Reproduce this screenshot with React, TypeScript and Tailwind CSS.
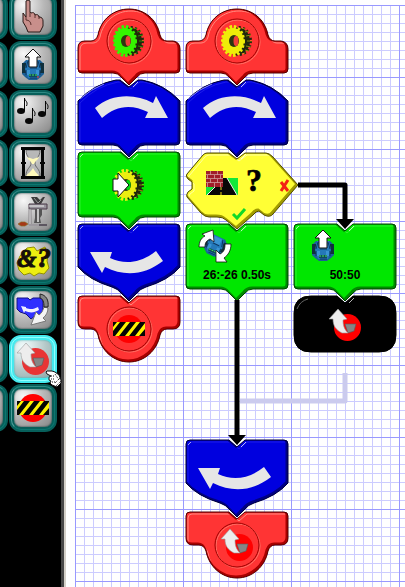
import { useId, useState, type ReactNode } from "react";

type IconName = "hand" | "forward" | "notes" | "timer" | "grinder" | "logic" | "subroutine" | "loop" | "stop";

function Robot() {
  return (
    <g>
      <path d="M9 11h14l4 4v10l-3 3-4 3h-8l-4-3-3-3V15z" fill="#1c5f96" />
      <path d="M5 14h4v10H5zM23 14h4v10h-4z" fill="#10303c" />
      <path d="M10 11h12l2 9-3 9H11l-3-9z" fill="#2478b8" />
      <path d="M12 12h8v7h-8zM10 21h3v5h-3zM19 21h3v5h-3z" fill="#3a93d2" />
      <path d="M13 19h7M13 29h7M9 21v5M23 21v5M11 12l-2 7M21 12l2 7" stroke="#0b3763" fill="none" />
      <path d="M12 25h8v3h-8z" fill="#114a5c" />
      <path d="M12 26h8" stroke="#45e45b" strokeDasharray="2 1" />
    </g>
  );
}

function Gear({ color, hub = "#f04038" }: { color: string; hub?: string }) {
  return (
    <g>
      <ellipse cx="18" cy="16" rx="11" ry="13" fill="#20270c" stroke="#20270c" strokeWidth="4" strokeDasharray="2 2" />
      <path d="M21 3l3 1M24 7l4-1M25 11l5-1M26 16h5M25 21l5 1M24 25l4 1M21 29l3-1" stroke={color} strokeWidth="1" opacity=".5" />
      <ellipse cx="12" cy="16" rx="10" ry="14" fill="none" stroke={color} strokeWidth="4" strokeDasharray="2.4 1.7" />
      <ellipse cx="12" cy="16" rx="7" ry="9" fill="none" stroke={color} strokeWidth="8" />
      <ellipse cx="13" cy="16" rx="5" ry="6" fill="#2c360f" />
      <ellipse cx="15" cy="16" rx="2.500" ry="5" fill={hub} />
    </g>
  );
}

function StopIcon() {
  return (
    <g>
      <circle cx="16" cy="16" r="14" fill="#ff0000" />
      <path d="M0 9h32v14H0z" fill="#fff200" />
      <path d="M0 9h4L0 14zM7 9h6L2 23H0v-5zM17 9h6L12 23H6zM27 9h5v1L22 23h-6zM32 16v7h-6z" fill="#050505" />
    </g>
  );
}

function LoopIcon({ circle = "#ff0000" }: { circle?: string }) {
  return (
    <g>
      <circle cx="18.5" cy="18.5" r="13.5" fill={circle} />
      <path d="M16 15h11l-2 7-6 2z" fill="#858585" stroke="#5b5b5b" strokeWidth=".6" />
      <path d="M9 0l9 10-4 1c0 5 1 9 5 13h-6C7 21 4 17 4 10H0z" fill="#ededed" stroke="#999" strokeWidth=".6" />
    </g>
  );
}

const icons: Record<IconName, ReactNode> = {
  hand: (
    <g>
      <path d="M9 1l2-1 2 1v11l1 1c2-1 4 0 4 2 2-1 4 0 4 2 3 0 4 2 4 4v5l-3 6H11l-2-5-3-5V13l3 4z" fill="#c88f8b" stroke="#281916" strokeWidth="1" />
      <path d="M13 12v5M18 14v4M22 16v3M9 17v3c3 0 5 2 5 5" fill="none" stroke="#5b302d" />
    </g>
  ),
  forward: (
    <g>
      <Robot />
      <path d="M16 0l8 8h-4v10h-8V8H8z" fill="#fff" stroke="#111" />
      <path d="M20 28h2" stroke="#e22" />
    </g>
  ),
  notes: (
    <g>
      <g fill="#080808">
        <ellipse cx="4" cy="13" rx="4" ry="3" />
        <ellipse cx="12" cy="23" rx="4" ry="3" />
        <ellipse cx="25" cy="16" rx="4" ry="3" />
      </g>
      <path d="M7.500 13V0c0 3 4 3 2 8M15.500 23V10c0 3 4 3 2 8M28.500 16V3c0 3 4 3 2 8" fill="none" stroke="#080808" />
    </g>
  ),
  timer: (
    <g>
      <path d="M9 3c0 8 5 8 5 13s-5 5-5 13h14c0-8-5-8-5-13s5-5 5-13z" fill="#b8b8b8" stroke="#686868" />
      <path d="M10 10l6 2 6-2c-1 3-4 4-5 7h-2c-1-3-4-4-5-7zM9 29c2-3 5-4 7-8 2 4 4 5 6 8z" fill="#fff9ba" />
      <path d="M4 0h24v3H4zM4 29h24v3H4z" fill="#050505" />
      <path d="M6.500 2v28M25.500 2v28" stroke="#050505" strokeWidth="3" />
      <path d="M4 16h5M23 16h5" stroke="#050505" strokeWidth="2" />
    </g>
  ),
  grinder: (
    <g>
      <path d="M14 1h6l3 3 3-3h2l-4 7h-6z" fill="#3c3c3c" />
      <path d="M17 2l4 5 3-3" fill="none" stroke="#999" />
      <path d="M12 8h18v5H12z" fill="#96929a" stroke="#4a3a48" strokeWidth="1" />
      <path d="M12 10h15" stroke="#eee" />
      <path d="M12 13h2v16h-2z" fill="#ddd" stroke="#716b70" strokeWidth=".7" />
      <path d="M18 13h7v6l-2 3 1 5h-7l1-5z" fill="#555" />
      <path d="M20 13h2v13h-2z" fill="#c4c4c4" />
      <path d="M12 29h18" stroke="#5c5660" strokeWidth="2" />
      <path d="M12 29h10" stroke="#ddd" />
      <path d="M1 28l3-2h4l3 2-3 2H4z" fill="#a63817" stroke="#8b6e28" strokeWidth=".7" />
    </g>
  ),
  logic: (
    <g>
      <path d="M3 11l7-8 7-1 3 4 8-4 3 9-1 5 2 7-5 6-5-1-5 3-4-3-6 2-5-5-2-7z" fill="#eeee10" stroke="#929000" strokeWidth="1" />
      <g fill="#160e0a" stroke="#160e0a">
        <text x="0" y="22" fontSize="25" className="font-['Liberation_Serif',serif] font-bold italic">&amp;</text>
        <text x="20" y="22" fontSize="28" className="font-['Liberation_Serif',serif] font-bold italic">?</text>
      </g>
    </g>
  ),
  subroutine: (
    <g>
      <path d="M0 4h11l2 2 3-2h10v13l-3 4-5 1-4 3-5-5-6-2-3-3z" fill="#3030ff" stroke="#111181" strokeWidth="1" />
      <path d="M4 12l5 1v1c5 2 8 1 12-1l1 3c-5 3-9 3-14 1l-1 2z" fill="#f2f2ff" />
      <path d="M27 13l4 1c0 4-2 8-5 10l3 3-15 4 5-13 3 3c3-2 4-5 5-8z" fill="#f4f4f4" stroke="#777" strokeWidth="1" />
      <path d="M23 0c6 1 9 6 8 13h-4c0-5-1-8-4-9z" fill="#858585" stroke="#222" />
    </g>
  ),
  loop: <LoopIcon circle="#e83434" />,
  stop: <StopIcon />,
};

const tools: { icon: IconName; label: string }[] = [
  { icon: "hand", label: "Select" },
  { icon: "forward", label: "Move" },
  { icon: "notes", label: "Music" },
  { icon: "timer", label: "Wait" },
  { icon: "grinder", label: "Process" },
  { icon: "logic", label: "Condition" },
  { icon: "subroutine", label: "Subroutine" },
  { icon: "loop", label: "Loop" },
  { icon: "stop", label: "Stop" },
];

function ToolButton({ label, selected, onClick, children }: { label: string; selected?: boolean; onClick?: () => void; children?: ReactNode }) {
  const frame = selected
    ? "border-[#45e9ee] bg-[radial-gradient(circle_at_25%_20%,#f4ffff,#b3c7c7_55%,#91a5a5)] shadow-[inset_0_0_2px_#1cb5b8]"
    : "border-[#075f5a] bg-[radial-gradient(circle_at_25%_20%,#f8f8f8,#b9b9b9_48%,#858585)] shadow-[inset_0_0_2px_#002c2c]";
  return (
    <button type="button" aria-label={label} aria-pressed={selected} onClick={onClick} className={`relative flex size-12 items-center justify-center rounded-xl border-5 ${frame}`}>
      <span className={`pointer-events-none absolute -inset-[3px] rounded-[10px] border ${selected ? "border-[#91ffff]" : "border-[#0b7770] border-t-[#2f8a84] border-l-[#4f9f9a]"}`} />
      <svg viewBox="0 0 32 32" className="relative size-8 shrink-0 overflow-visible">{children}</svg>
    </button>
  );
}

const outlines = {
  start: "M3 43Q3 36 10 36H16Q21 36 23 30C26 14 39 4 54 4S82 14 85 30Q87 36 92 36H98Q105 37 105 44V64Q105 68 101 68H70Q65 68 62 72L54 80L46 72Q43 68 38 68H7Q3 68 3 64Z",
  right: "M3 24Q19 7 41 3H45L54 10L63 3H67Q89 7 105 24V64Q105 68 101 68H70Q65 68 62 72L54 80L46 72Q43 68 38 68H7Q3 68 3 64Z",
  left: "M3 7Q3 3 7 3H46L54 10L62 3H101Q105 3 105 7V46Q94 59 71 66Q65 68 62 72L54 80L46 72Q43 68 37 66Q14 59 3 46Z",
  action: "M3 7Q3 3 7 3H46L54 10L62 3H101Q105 3 105 7V64Q105 68 101 68H70Q65 68 62 72L54 80L46 72Q43 68 38 68H7Q3 68 3 64Z",
  condition: "M24 4H46L54 10L62 4H83Q86 4 90 8L115 36L90 65Q87 69 81 66L76 62Q73 62 70 66L54 80L43 71Q40 68 34 68H26Q22 68 18 64L4 48Q3 46 5 43L9 40V33L5 30Q2 27 4 25L20 6Q22 4 24 4Z",
  end: "M3 7Q3 3 7 3H46L54 10L62 3H101Q105 3 105 7V29Q105 36 98 36H92Q87 36 85 42C82 58 69 69 54 69S26 58 23 42Q21 36 16 36H10Q3 36 3 29Z",
  black: "M20 3H46L54 10L62 3H88Q105 3 105 20V42Q105 59 88 59H20Q3 59 3 42V20Q3 3 20 3Z",
};

const paints = {
  red: { fill: "#ff3434", dark: "#a80000", edge: "#520000", light: "#ff8b80" },
  blue: { fill: "#0000df", dark: "#000083", edge: "#000039", light: "#1c1cea" },
  green: { fill: "#00e700", dark: "#008a00", edge: "#004400", light: "#2cf22c" },
  yellow: { fill: "#ffff35", dark: "#a19b00", edge: "#514c00", light: "#ffffa2" },
  black: { fill: "#000000", dark: "#000000", edge: "#000000", light: "#000000" },
};

function Block({ shape, color, children }: { shape: keyof typeof outlines; color: keyof typeof paints; children: ReactNode }) {
  const id = useId();
  const paint = paints[color];
  const d = outlines[shape];
  return (
    <svg viewBox="0 0 108 72" className="h-[72px] w-[108px] overflow-visible">
      <clipPath id={id}><path d={d} /></clipPath>
      <path d={d} fill={paint.fill} />
      <g clipPath={`url(#${id})`} fill="none">
        <path d={d} transform="translate(2 2)" stroke={paint.light} strokeWidth="1" />
        <path d={d} transform="translate(-1 -1)" stroke={paint.dark} strokeWidth="3" />
      </g>
      <path d={d} fill="none" stroke={paint.edge} strokeWidth="1" />
      {color !== "red" && <path d="M58 10l5-5" stroke="#fff" strokeWidth="1" opacity=".7" />}
      {shape === "right" && <path d="M5 22Q16 12 29 7" fill="none" stroke="#8c8cf8" />}
      {(shape === "left" || shape === "action") && <path d="M5 8l3-3" stroke="#fff" opacity=".6" />}
      {shape === "black" && <path d="M6 16Q9 8 17 6" fill="none" stroke="#666" />}
      {(shape === "start" || shape === "end") && (
        <g fill="none">
          <circle cx="55" cy="37" r="22" stroke="#ff7468" />
          <circle cx="54" cy="36" r="22" stroke="#9d0000" strokeWidth="1" />
        </g>
      )}
      {children}
    </svg>
  );
}

const turnRight = <path d="M20 31C36 17 59 16 78 26L81 19L93 41H70L73 35C57 27 41 28 27 41Z" fill="#e6e6e6" />;
const turnLeft = <path d="M15 31H37L35 37C50 44 66 42 81 30L88 40C70 54 50 56 30 46L27 52Z" fill="#e6e6e6" />;

const labelClass = "font-['Liberation_Sans',Arial,sans-serif] text-xs font-bold";

const program: { place: string; row: number; name: string; node: ReactNode }[] = [
  { place: "col-start-1 row-start-1", row: 0, name: "Start main", node: <Block shape="start" color="red"><g transform="translate(38 20)"><Gear color="#35f500" /></g></Block> },
  { place: "col-start-1 row-start-2", row: 1, name: "Turn right", node: <Block shape="right" color="blue">{turnRight}</Block> },
  {
    place: "col-start-1 row-start-3", row: 2, name: "Run task",
    node: (
      <Block shape="action" color="green">
        <g transform="translate(38 20)"><Gear color="#ecee10" hub="#00dc10" /></g>
        <path d="M38 30H43V24L54 36L43 48V42H38Z" fill="#fff" stroke="#111" />
      </Block>
    ),
  },
  { place: "col-start-1 row-start-4", row: 3, name: "Turn left", node: <Block shape="left" color="blue">{turnLeft}</Block> },
  { place: "col-start-1 row-start-5", row: 4, name: "Stop", node: <Block shape="end" color="red"><g transform="translate(38 20)"><StopIcon /></g></Block> },
  { place: "col-start-2 row-start-1", row: 0, name: "Start task", node: <Block shape="start" color="red"><g transform="translate(38 20)"><Gear color="#efed08" /></g></Block> },
  { place: "col-start-2 row-start-2", row: 1, name: "Turn right", node: <Block shape="right" color="blue">{turnRight}</Block> },
  {
    place: "col-start-2 row-start-3", row: 2, name: "Obstacle ahead?",
    node: (
      <Block shape="condition" color="yellow">
        <path d="M23 29H55V46H23Z" fill="#12e839" />
        <path d="M24 46L39 29H44L54 46Z" fill="#080808" />
        <path d="M24 46L35 35M44 29L54 46" stroke="#eee" />
        <path d="M38 38V46" stroke="#ecd41a" strokeDasharray="3 2" />
        <path d="M23 22H40V38H23Z" fill="#a01e29" />
        <path d="M23 25.500H40M23 29.500H40M23 33.500H40M27.500 22V26M34.500 22V26M24.500 26V30M31.500 26V30M37.500 26V30M27.500 30V34M34.500 30V34M24.500 34V38M31.500 34V38M37.500 34V38" stroke="#d09b9b" strokeWidth=".8" />
        <text x="71" y="42" textAnchor="middle" fontSize="32" stroke="#000" strokeWidth=".6" className="font-['Liberation_Serif',serif] font-bold">?</text>
        <path d="M98 33L105 42M105 31L98 42" stroke="#f32313" strokeWidth="3" />
        <path d="M50 65L54 69L62 60" fill="none" stroke="#10d928" strokeWidth="3" />
      </Block>
    ),
  },
  {
    place: "col-start-2 row-start-4", row: 3, name: "Drive motors",
    node: (
      <Block shape="action" color="green">
        <g transform="rotate(25 32 24) translate(16 4)"><Robot /></g>
        <path d="M19 13L30 9L31 21L27 18C23 20 22 22 22 26H16C16 21 18 17 22 15Z" fill="#fff" stroke="#111" strokeWidth=".8" />
        <path d="M44 41H33V29L37 33C41 31 42 28 42 23H48C48 30 45 34 41 37Z" fill="#fff" stroke="#111" strokeWidth=".8" />
        <text x="54" y="58" textAnchor="middle" className={labelClass}>26:-26 0.50s</text>
      </Block>
    ),
  },
  { place: "col-start-2 row-start-7", row: 6, name: "Turn left", node: <Block shape="left" color="blue">{turnLeft}</Block> },
  { place: "col-start-2 row-start-8", row: 7, name: "Loop", node: <Block shape="end" color="red"><g transform="translate(38 20)"><LoopIcon /></g></Block> },
  {
    place: "col-start-3 row-start-4", row: 3, name: "Move forward",
    node: (
      <Block shape="action" color="green">
        <g transform="translate(16 9)"><Robot /><path d="M16 0l8 8h-4v10h-8V8H8z" fill="#fff" stroke="#111" /></g>
        <text x="54" y="58" textAnchor="middle" className={labelClass}>50:50</text>
      </Block>
    ),
  },
  { place: "col-start-3 row-start-5", row: 4, name: "Loop", node: <Block shape="black" color="black"><g transform="translate(38 16)"><LoopIcon /></g></Block> },
];

export default function App() {
  const [selected, setSelected] = useState<IconName>("loop");
  return (
    <div className="flex min-h-screen overflow-hidden bg-white font-['Liberation_Sans',Arial,sans-serif]">
      <aside className="relative w-[66px] shrink-0 border-r-2 border-[#d4d0c8] bg-black">
        <div className="h-full overflow-hidden border-r-3 border-[#484848]">
          <div className="-mt-2 -ml-10 grid w-[97px] grid-cols-2 gap-px">
            {tools.map((tool, i) => [
              <ToolButton key={`tool-${i}`} label={`Tool ${i + 1}`} />,
              <ToolButton key={tool.icon} label={tool.label} selected={selected === tool.icon} onClick={() => setSelected(tool.icon)}>
                {icons[tool.icon]}
              </ToolButton>,
            ])}
          </div>
        </div>
        <svg viewBox="0 0 16 16" className="pointer-events-none absolute top-[371px] left-[46px] size-4 overflow-visible">
          <path d="M1 0h5l3 1 4 3 2 5v3l-4 4-5-2-2-2 1-2-2-1V6l2-1-4-2-1-2z" fill="#fff" stroke="#111" />
          <path d="M5 5h4M5 8h4M6 11h4M9 3l4 6M9 12l5-5M10 15l5-5" stroke="#111" strokeDasharray="1 1" />
        </svg>
      </aside>
      <main className="min-w-0 flex-1 pt-[5px] pl-[9px]">
        <div className="relative grid h-full auto-rows-[72px] grid-cols-[repeat(3,108px)] content-start bg-[linear-gradient(to_right,#9999ff_1px,transparent_1px),linear-gradient(to_bottom,#9999ff_1px,transparent_1px),linear-gradient(to_right,#ccccff_1px,transparent_1px),linear-gradient(to_bottom,#ccccff_1px,transparent_1px)] bg-[size:108px_72px,108px_72px,9px_9px,9px_9px]">
          {program.map((block) => (
            <div key={block.place} role="group" aria-label={block.name} className={`relative ${block.place}`} style={{ zIndex: 8 - block.row }}>
              {block.node}
            </div>
          ))}
          <svg viewBox="0 0 324 576" className="pointer-events-none absolute top-0 left-0 z-20 h-[576px] w-[324px] overflow-visible">
            <path d="M270 368V396H165" fill="none" stroke="#cbcbee" strokeWidth="5" strokeLinejoin="round" />
            <path d="M223 180H270V216M162 295V432" fill="none" stroke="#000" strokeWidth="5" strokeLinejoin="round" />
            <path d="M261 214H279L270 224ZM153 430H171L162 440Z" />
          </svg>
        </div>
      </main>
    </div>
  );
}
